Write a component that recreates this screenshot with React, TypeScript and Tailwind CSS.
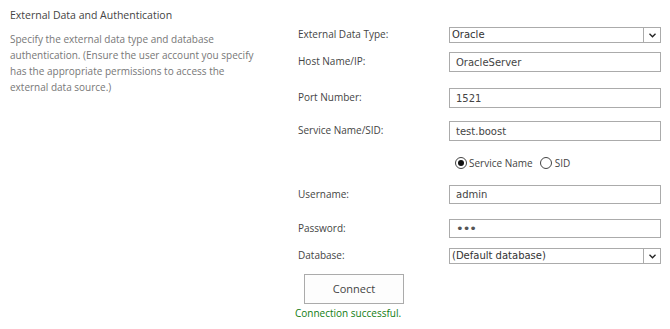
import React from "react";

const ui = { fontFamily: '"Open Sans", "Noto Sans", Arial, sans-serif' };
const field = { fontFamily: '"DejaVu Sans", Verdana, sans-serif' };

function Label({ children }: { children: React.ReactNode }) {
    return (
        <div className="w-[151px] shrink-0 text-[10px] leading-[14px] text-[#444] -mt-[2px]" style={ui}>
            {children}
        </div>
    );
}

function TextBox({ value, h = "h-[20px]" }: { value: React.ReactNode; h?: string }) {
    return (
        <div
            className={`w-[212px] ${h} border border-[#ababab] bg-white flex items-center pl-[6px] text-[10px] text-[#444]`}
            style={field}
        >
            {value}
        </div>
    );
}

function Select({ value }: { value: string }) {
    return (
        <div
            className="w-[212px] h-[16px] border border-[#ababab] bg-white flex items-center text-[10px] text-[#333]"
            style={field}
        >
            <span className="flex-1 pl-[2px] leading-[14px]">{value}</span>
            <span className="w-[17px] h-full border-l border-[#ababab] flex items-center justify-center">
                <svg width="7" height="5" viewBox="0 0 7 5">
                    <path d="M0.5 0.8 L3.5 3.8 L6.5 0.8" fill="none" stroke="#222" strokeWidth="1.3" />
                </svg>
            </span>
        </div>
    );
}

function Radio({ checked }: { checked?: boolean }) {
    return (
        <span className="w-[12px] h-[12px] rounded-full border border-[#444] bg-white flex items-center justify-center shrink-0">
            {checked && <span className="w-[6px] h-[6px] rounded-full bg-[#111]" />}
        </span>
    );
}

export default function App() {
    return (
        <div className="w-[670px] h-[329px] bg-white flex" style={ui}>
            <div className="w-[290px] shrink-0 pl-[10px] pt-[8px]">
                <div className="text-[10.5px] leading-[14px] text-[#444]">External Data and Authentication</div>
                <p className="mt-[9px] w-[250px] text-[10px] leading-[16px] text-[#777]">
                    Specify the external data type and database authentication. (Ensure the user account you specify
                    has the appropriate permissions to access the external data source.)
                </p>
            </div>

            <div className="pl-[8px] flex flex-col">
                <div className="mt-[27px] flex items-center h-[16px]">
                    <Label>External Data Type:</Label>
                    <Select value="Oracle" />
                </div>
                <div className="mt-[9px] flex items-center">
                    <Label>Host Name/IP:</Label>
                    <TextBox value="OracleServer" />
                </div>
                <div className="mt-[16px] flex items-center">
                    <Label>Port Number:</Label>
                    <TextBox value="1521" />
                </div>
                <div className="mt-[13px] flex items-center">
                    <Label>Service Name/SID:</Label>
                    <TextBox value="test.boost" />
                </div>
                <div className="mt-[15px] h-[14px] pl-[157px] flex items-center text-[10px] text-[#444]">
                    <Radio checked />
                    <span className="ml-[2px]">Service Name</span>
                    <span className="ml-[7px]"><Radio /></span>
                    <span className="ml-[3px]">SID</span>
                </div>
                <div className="mt-[15px] flex items-center">
                    <Label>Username:</Label>
                    <TextBox value="admin" h="h-[19px]" />
                </div>
                <div className="mt-[15px] flex items-center">
                    <Label>Password:</Label>
                    <TextBox value={<span className="text-[13px] leading-none text-[#555] tracking-[-1px]">•••</span>} h="h-[19px]" />
                </div>
                <div className="mt-[10px] flex items-center h-[16px]">
                    <Label>Database:</Label>
                    <Select value="(Default database)" />
                </div>
                <button className="mt-[10px] ml-[6px] w-[100px] h-[30px] border border-[#ababab] bg-[#fdfdfd] text-[11px] text-[#444]">
                    Connect
                </button>
                <div className="mt-[1px] -ml-[3px] text-[10px] leading-[16px] text-[#107c10]">Connection successful.</div>
            </div>
        </div>
    );
}
